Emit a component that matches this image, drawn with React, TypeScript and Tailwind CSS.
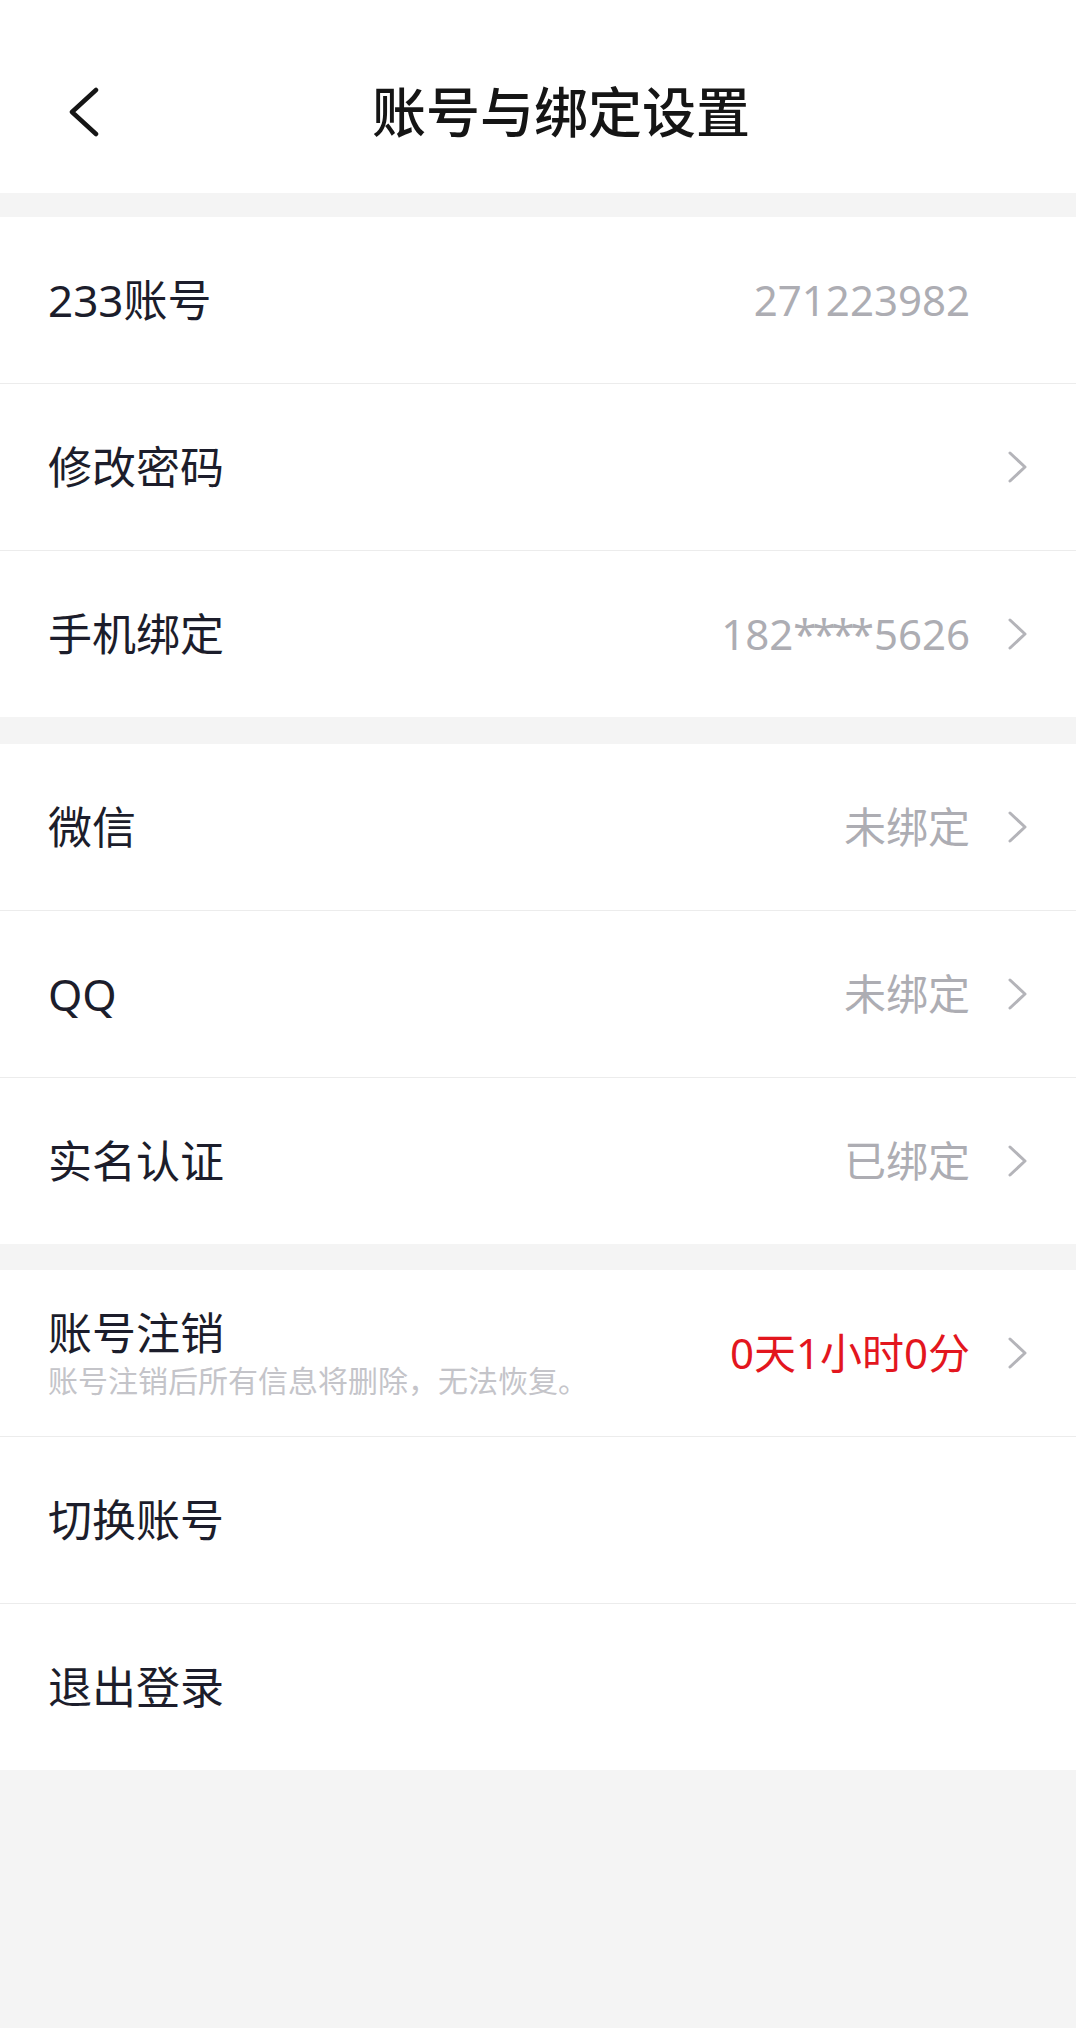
import React from 'react';

interface RowProps {
  label: string;
  value?: React.ReactNode;
  sub?: string;
  danger?: boolean;
  arrow?: boolean;
  first?: boolean;
}

const ChevronRight = () => (
  <svg width="21" height="34" viewBox="0 0 21 34" fill="none">
    <path d="M3 3 L18 17 L3 31" stroke="#b4b4b9" strokeWidth="3" strokeLinecap="round" strokeLinejoin="round" />
  </svg>
);

const Row = ({ label, value, sub, danger, arrow = true, first }: RowProps) => (
  <div
    className={
      first
        ? 'flex items-center h-[166px] pl-[48px] pr-[48px]'
        : 'flex items-center h-[167px] pl-[48px] pr-[48px] border-t-[1.5px] border-[#ececec]'
    }
  >
    <div className="flex flex-col">
      <span className="text-[44px] leading-[52px] text-[#1c1d2b]">{label}</span>
      {sub && <span className="text-[30px] leading-[36px] mt-1 text-[#c4c4c9]">{sub}</span>}
    </div>
    <div className="flex-1" />
    {value && (
      <span className={danger ? 'text-[42px] leading-[50px] text-[#e3161e]' : 'text-[42px] leading-[50px] text-[#adadb3]'}>
        {value}
      </span>
    )}
    <div className="w-[21px] ml-[37px] flex items-center">{arrow && <ChevronRight />}</div>
  </div>
);

const App = () => {
  return (
    <div
      className="min-h-[2028px] bg-[#f4f4f4]"
      style={{ fontFamily: '"Noto Sans", "Noto Sans CJK SC", sans-serif' }}
    >
      <header className="bg-white h-[193px] pt-[30px] grid grid-cols-[1fr_auto_1fr] items-center">
        <div className="pl-[68px] flex items-center">
          <svg width="32" height="50" viewBox="0 0 32 50" fill="none">
            <path d="M28 3 L4 25 L28 47" stroke="#151515" strokeWidth="4.5" strokeLinecap="round" strokeLinejoin="round" />
          </svg>
        </div>
        <h1 className="pl-[46px] text-[54px] font-medium text-[#151515] leading-none">账号与绑定设置</h1>
        <div />
      </header>

      <section className="mt-[24px] bg-white">
        <Row first label="233账号" value="271223982" arrow={false} />
        <Row label="修改密码" />
        <Row
          label="手机绑定"
          value={
            <>
              182<span className="tracking-[-4px] mr-[4px]">****</span>5626
            </>
          }
        />
      </section>

      <section className="mt-[27px] bg-white">
        <Row first label="微信" value="未绑定" />
        <Row label="QQ" value="未绑定" />
        <Row label="实名认证" value="已绑定" />
      </section>

      <section className="mt-[26px] bg-white">
        <Row first label="账号注销" sub="账号注销后所有信息将删除，无法恢复。" value="0天1小时0分" danger />
        <Row label="切换账号" arrow={false} />
        <Row label="退出登录" arrow={false} />
      </section>
    </div>
  );
};

export default App;
